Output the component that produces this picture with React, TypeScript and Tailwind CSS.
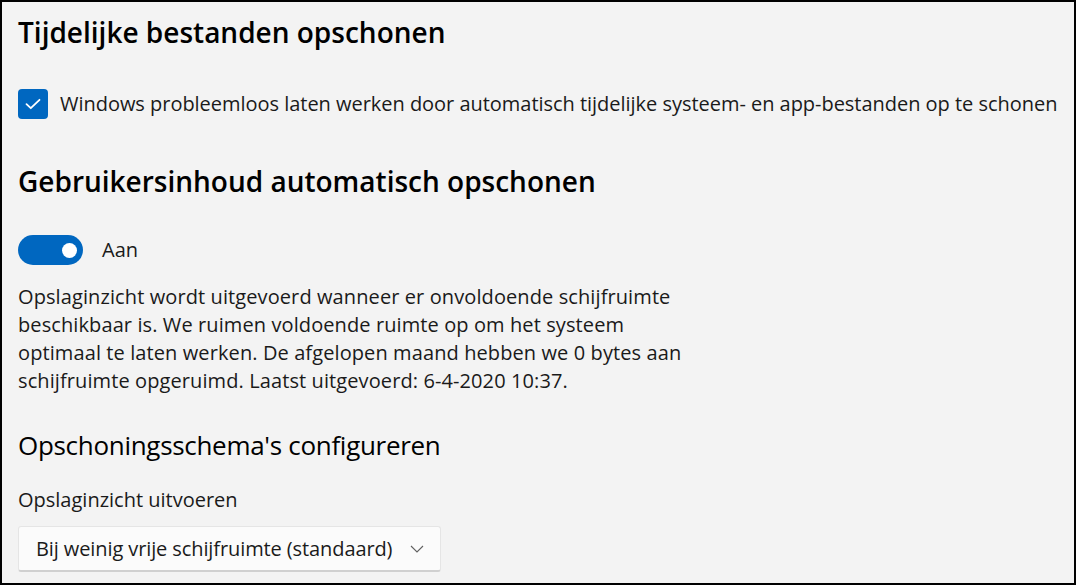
import React from "react";

export default function App() {
  return (
    <div
      className="w-[1076px] h-[585px] border-2 border-black bg-[#f3f3f3] overflow-hidden pl-4 text-[#1a1a1a]"
      style={{ fontFamily: '"Open Sans", "Noto Sans", sans-serif' }}
    >
      <div className="mt-3 h-9 leading-9 text-[28px] font-semibold text-black">
        Tijdelijke bestanden opschonen
      </div>

      <div className="mt-[39px] h-[30px] flex items-center">
        <div className="w-[30px] h-[30px] rounded-[4px] bg-[#0067c0] flex items-center justify-center shrink-0">
          <svg width="16" height="12" viewBox="0 0 16 12" fill="none">
            <path d="M1.5 6.2 L5.8 10.2 L14.5 1.8" stroke="white" strokeWidth="1.8" strokeLinecap="round" strokeLinejoin="round" />
          </svg>
        </div>
        <span className="ml-3 text-[20px] leading-7 whitespace-nowrap tracking-[-0.03px]">
          Windows probleemloos laten werken door automatisch tijdelijke systeem- en app-bestanden op te schonen
        </span>
      </div>

      <div className="mt-[44px] h-9 leading-9 text-[28px] font-semibold text-black">
        Gebruikersinhoud automatisch opschonen
      </div>

      <div className="mt-9 h-[30px] flex items-center">
        <div className="w-[65px] h-[30px] rounded-full bg-[#0067c0] flex items-center justify-end pr-[6px] shrink-0">
          <div className="w-[15px] h-[15px] rounded-full bg-white" />
        </div>
        <span className="ml-[19px] text-[20px] leading-7">Aan</span>
      </div>

      <div className="mt-[18px] text-[20px] leading-7 tracking-[0.1px]">
        <div>Opslaginzicht wordt uitgevoerd wanneer er onvoldoende schijfruimte</div>
        <div>beschikbaar is. We ruimen voldoende ruimte op om het systeem</div>
        <div>optimaal te laten werken. De afgelopen maand hebben we 0 bytes aan</div>
        <div>schijfruimte opgeruimd. Laatst uitgevoerd: 6-4-2020 10:37.</div>
      </div>

      <div className="mt-8 h-9 leading-9 text-[26px] text-black tracking-[-0.3px]">
        Opschoningsschema's configureren
      </div>

      <div className="mt-[23px] h-7 leading-7 text-[20px]">Opslaginzicht uitvoeren</div>

      <div className="mt-3 w-[423px] h-[46px] bg-[#fbfbfb] border border-[#e5e5e5] border-b-[#d0d0d0] border-b-2 rounded-[3px] flex items-center pl-[17px] pr-[16px] justify-between">
        <span className="text-[20px] leading-7 tracking-[-0.1px]">Bij weinig vrije schijfruimte (standaard)</span>
        <svg width="14" height="8" viewBox="0 0 14 8" fill="none">
          <path d="M1 1 L7 7 L13 1" stroke="#606060" strokeWidth="1.1" />
        </svg>
      </div>
    </div>
  );
}
